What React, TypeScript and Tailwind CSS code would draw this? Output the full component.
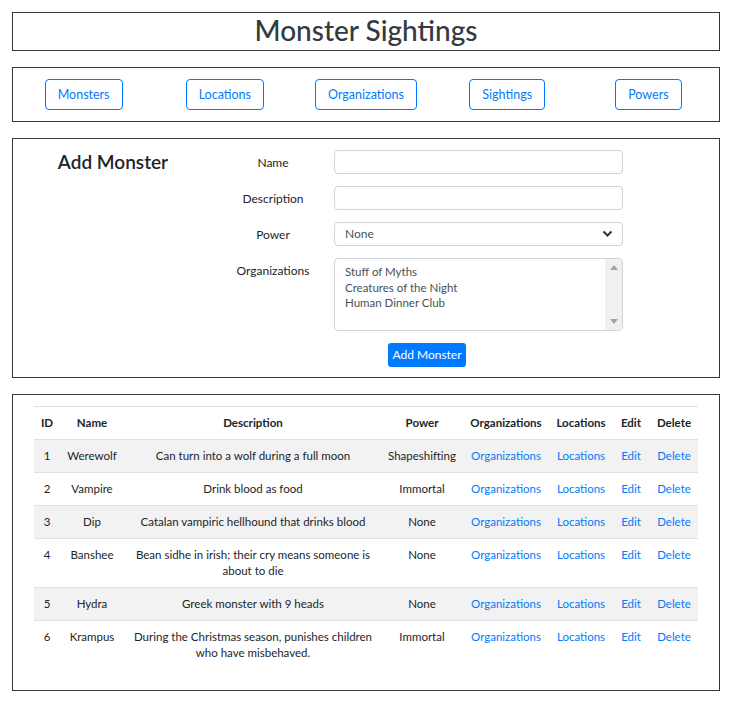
import React from "react";

const font = { fontFamily: "Lato, 'Open Sans', sans-serif" };

const monsters = [
  { id: 1, name: "Werewolf", desc: "Can turn into a wolf during a full moon", power: "Shapeshifting" },
  { id: 2, name: "Vampire", desc: "Drink blood as food", power: "Immortal" },
  { id: 3, name: "Dip", desc: "Catalan vampiric hellhound that drinks blood", power: "None" },
  { id: 4, name: "Banshee", desc: "Bean sidhe in irish; their cry means someone is about to die", power: "None" },
  { id: 5, name: "Hydra", desc: "Greek monster with 9 heads", power: "None" },
  { id: 6, name: "Krampus", desc: "During the Christmas season, punishes children who have misbehaved.", power: "Immortal" },
];

const navItems = ["Monsters", "Locations", "Organizations", "Sightings", "Powers"];

function Label({ children }: { children: React.ReactNode }) {
  return (
    <div className="w-[100px] ml-[10px] mr-[11px] text-center text-[12px] leading-[16px] text-[#212529] pt-[5px]">
      {children}
    </div>
  );
}

export default function App() {
  return (
    <div style={font} className="bg-white min-h-[706px] pt-3 text-[#212529]">
      <div className="ml-3 w-[708px] flex flex-col gap-4">
        {/* Title */}
        <div className="border border-[#343a40] h-[39px] flex items-center justify-center pb-[3px]">
          <h2 className="text-[28px] leading-[34px] font-medium text-[#343a40]">Monster Sightings</h2>
        </div>

        {/* Nav */}
        <div className="border border-[#343a40] h-[55px] grid grid-cols-5 items-center justify-items-center">
          {navItems.map((n) => (
            <button
              key={n}
              className="h-[31px] px-[12px] pt-[1px] border border-[#007bff] rounded-[4px] text-[#007bff] text-[12.5px] bg-white"
            >
              {n}
            </button>
          ))}
        </div>

        {/* Form */}
        <div className="border border-[#343a40] h-[240px] flex pt-[11px]">
          <div className="w-[200px] text-center">
            <h3 className="text-[19px] leading-[24px] font-semibold">Add Monster</h3>
          </div>
          <div className="flex flex-col gap-[12px]">
            <div className="flex">
              <Label>Name</Label>
              <div className="w-[289px] h-[24px] border border-[#ced4da] rounded-[4px] bg-white" />
            </div>
            <div className="flex">
              <Label>Description</Label>
              <div className="w-[289px] h-[24px] border border-[#ced4da] rounded-[4px] bg-white" />
            </div>
            <div className="flex">
              <Label>Power</Label>
              <div className="w-[289px] h-[24px] border border-[#ced4da] rounded-[4px] bg-white flex items-center justify-between pl-[10px] pr-[9px] text-[12px] text-[#495057]">
                <span>None</span>
                <svg width="11" height="8" viewBox="0 0 11 8">
                  <path d="M1.5 1.5 L5.5 5.5 L9.5 1.5" stroke="#333" strokeWidth="2" fill="none" />
                </svg>
              </div>
            </div>
            <div className="flex">
              <Label>Organizations</Label>
              <div className="w-[289px] h-[73px] border border-[#ced4da] rounded-[4px] bg-white flex text-[11.5px] text-[#495057] overflow-hidden">
                <div className="flex-1 pl-[10px] pt-[5px] leading-[15.5px]">
                  <div>Stuff of Myths</div>
                  <div>Creatures of the Night</div>
                  <div>Human Dinner Club</div>
                </div>
                <div className="w-[17px] bg-[#f0f0f0] flex flex-col items-center justify-between py-[6px]">
                  <svg width="8" height="5" viewBox="0 0 8 5">
                    <path d="M0 5 L4 0 L8 5 Z" fill="#a3a3a3" />
                  </svg>
                  <svg width="8" height="5" viewBox="0 0 8 5">
                    <path d="M0 0 L4 5 L8 0 Z" fill="#a3a3a3" />
                  </svg>
                </div>
              </div>
            </div>
            <div className="flex pl-[175px]">
              <button className="w-[78px] h-[24px] bg-[#007bff] text-white text-[12px] rounded-[3px]">
                Add Monster
              </button>
            </div>
          </div>
        </div>

        {/* Table */}
        <div className="border border-[#343a40] pt-[11px] pb-[21px] pl-[21px] pr-[20px]">
          <table className="w-[664px] table-fixed border-collapse text-[11.5px] leading-[16px] text-center">
            <colgroup>
              <col className="w-[26px]" />
              <col className="w-[64px]" />
              <col className="w-[258px]" />
              <col className="w-[80px]" />
              <col className="w-[88px]" />
              <col className="w-[62px]" />
              <col className="w-[38px]" />
              <col className="w-[48px]" />
            </colgroup>
            <thead>
              <tr className="border-t border-[#dee2e6] font-bold">
                <th className="py-[8px]">ID</th>
                <th className="py-[8px]">Name</th>
                <th className="py-[8px]">Description</th>
                <th className="py-[8px]">Power</th>
                <th className="py-[8px]">Organizations</th>
                <th className="py-[8px]">Locations</th>
                <th className="py-[8px]">Edit</th>
                <th className="py-[8px]">Delete</th>
              </tr>
            </thead>
            <tbody>
              {monsters.map((m, i) => (
                <tr
                  key={m.id}
                  className={`border-t border-[#dee2e6] ${i % 2 === 0 ? "bg-[#f2f2f2]" : "bg-white"}`}
                >
                  <td className="py-[8px] align-top">{m.id}</td>
                  <td className="py-[8px] align-top">{m.name}</td>
                  <td className="py-[8px] px-[4px] align-top">{m.desc}</td>
                  <td className="py-[8px] align-top">{m.power}</td>
                  <td className="py-[8px] align-top text-[#007bff]">Organizations</td>
                  <td className="py-[8px] align-top text-[#007bff]">Locations</td>
                  <td className="py-[8px] align-top text-[#007bff]">Edit</td>
                  <td className="py-[8px] align-top text-[#007bff]">Delete</td>
                </tr>
              ))}
            </tbody>
          </table>
        </div>
      </div>
    </div>
  );
}
